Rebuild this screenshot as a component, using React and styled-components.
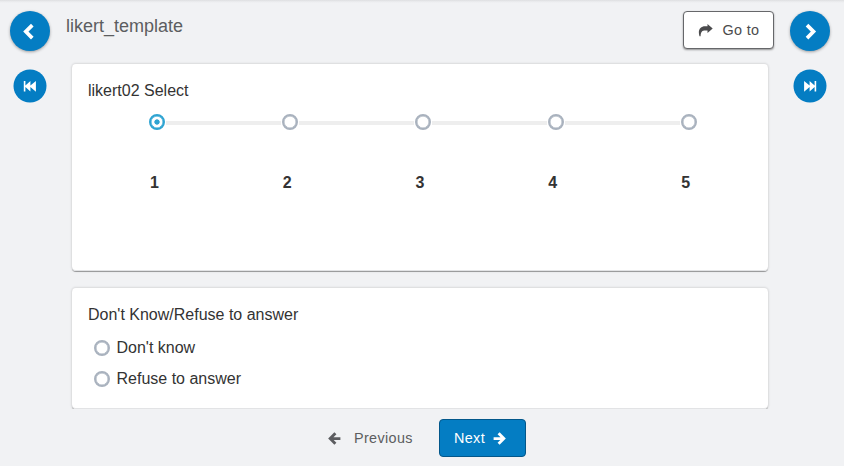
import React, { useState } from "react";
import styled, { createGlobalStyle } from "styled-components";

const GlobalStyle = createGlobalStyle`
  * { box-sizing: border-box; }
  body {
    margin: 0;
    background: #f1f2f4;
    color: #333;
    font: 16px/20px "Liberation Sans", Arial, sans-serif;
  }
  button { font-family: inherit; margin: 0; padding: 0; cursor: pointer; }
`;

const Page = styled.div`
  display: grid;
  grid-template-columns: 66px 708px 1fr;
  height: 466px;
  overflow: hidden;
  background: linear-gradient(#dcdddf, #e7e8ea 1px, #f1f2f4 3px);
`;

const SideNav = styled.nav`
  display: flex;
  flex-direction: column;
  align-items: center;
  width: 40px;
  gap: 19px;
  padding-top: 11px;
  margin-left: ${(p) => (p.$end ? "16px" : "10px")};
`;

const RoundButton = styled.button`
  display: flex;
  align-items: center;
  justify-content: center;
  flex: none;
  width: ${(p) => (p.$small ? 32 : 40)}px;
  height: ${(p) => (p.$small ? 32 : 40)}px;
  border: 0;
  border-radius: 50%;
  background: #047dc3;
  color: #fff;
  box-shadow: ${(p) => (p.$small ? "0 0 0 0.5px #047dc3" : "0 1px 3px rgba(0, 0, 0, 0.35)")};
`;

const Center = styled.div`
  display: grid;
  grid-template-rows: 56px 353px 57px;
`;

const Header = styled.header`
  display: flex;
  justify-content: space-between;
  align-items: flex-start;
  padding-top: 11px;
`;

const Title = styled.h1`
  margin: 4px 0 0;
  font-size: 18px;
  line-height: 22px;
  font-weight: 400;
  color: #5c5d60;
`;

const GoToButton = styled.button`
  display: flex;
  align-items: center;
  width: 91px;
  height: 38px;
  padding-left: 14px;
  gap: 9.5px;
  border: 1px solid #66676a;
  border-radius: 4px;
  background: #fff;
  color: #4b4b4d;
  font-size: 14.4px;
  letter-spacing: 0.35px;
  box-shadow: 0 1px 2px rgba(0, 0, 0, 0.4);
`;

const Forms = styled.main`
  display: flex;
  flex-direction: column;
  gap: 17px;
  padding: 8px 6px 0;
  overflow: hidden;
`;

const Card = styled.section`
  flex: none;
  height: ${(p) => p.$height}px;
  padding: 17px 16px 16px;
  border-radius: 4px;
  background: #fff;
  box-shadow: inset 0 -1px 0 #e2e3e5, 0 0 2px 1px rgba(0, 0, 0, 0.1),
    0 1px 0 rgba(0, 0, 0, 0.3);
`;

const Question = styled.h2`
  margin: 0;
  font-size: 16px;
  line-height: 20px;
  font-weight: 400;
`;

const Scale = styled.div`
  display: grid;
  grid-template-columns: repeat(5, 1fr);
  margin-top: 13px;
`;

const Step = styled.label`
  display: flex;
  flex-direction: column;
  align-items: center;
  gap: 43px;
  font-weight: 700;
`;

const StepTrack = styled.span`
  display: flex;
  align-items: center;
  align-self: stretch;
  height: 16px;
  gap: 1px;
`;

const Segment = styled.span`
  height: 4px;
  margin-top: 2px;
  background: ${(p) => (p.$hidden ? "transparent" : "#eee")};
  flex: ${(p) => (p.$before ? "0 0 60.4px" : "1 1 0")};
`;

const Radio = styled.input`
  appearance: none;
  flex: none;
  width: 16px;
  height: 16px;
  margin: 0;
  border: 2px solid #a9b2be;
  box-shadow: inset 0 0 0 0.5px #a9b2be;
  border-radius: 50%;
  background: #fff;
  cursor: pointer;
  &:checked {
    border-color: #2fa4d2;
    box-shadow: inset 0 0 0 0.5px #2fa4d2;
    background: radial-gradient(circle, #2fa4d2 2.3px, #fff 3px);
  }
`;

const Choices = styled.div`
  display: flex;
  flex-direction: column;
  gap: 11px;
  padding: 13px 0 0 5.5px;
`;

const Choice = styled.label`
  display: flex;
  align-items: center;
  gap: 7px;
  line-height: 20px;
`;

const Footer = styled.footer`
  display: flex;
  align-items: flex-start;
  justify-content: space-between;
  padding: 10px 248px 0 262px;
`;

const FooterButton = styled.button`
  display: flex;
  align-items: center;
  height: 38px;
  border: 0;
  background: none;
  color: #5c5d60;
  font-size: 14.4px;
  letter-spacing: 0.35px;
  gap: 13px;
`;

const NextButton = styled(FooterButton)`
  width: 87px;
  padding-left: 14px;
  gap: 8px;
  border: 1px solid #03578a;
  border-radius: 4px;
  background: #047dc3;
  color: #fff;
`;

const Glyph = styled.svg`
  display: block;
  flex: none;
  transform: ${(p) => (p.$flip ? "scaleX(-1)" : "none")};
`;

const Chevron = ({ flip }) => (
  <Glyph $flip={flip} width="16" height="18" viewBox="0 0 16 18" fill="none" stroke="currentColor" strokeWidth="3.7">
    <path d={flip ? "M11 3.1 4.5 9.6 11 16.1" : "M10.3 3.1 3.8 9.6 10.3 16.1"} />
  </Glyph>
);

const Skip = ({ flip }) => (
  <Glyph $flip={flip} width="14" height="12" viewBox="0 0 14 12" fill="currentColor">
    <path d="M.8 1h1.6v4.6L7.4 1v4.4L12.9.9v10.8L7.4 7.1v4.5L2.4 7v4.5H.8z" />
  </Glyph>
);

const Arrow = ({ flip }) => (
  <Glyph $flip={flip} width="13" height="13" viewBox="0 0 13 13" fill="none" stroke="currentColor" strokeWidth="2.9">
    <path d="M7.4 1.3 2.2 6.6l5.2 5.2M2.6 6.6h9.8" />
  </Glyph>
);

const ShareArrow = () => (
  <Glyph width="15" height="13" viewBox="0 0 15 13" fill="currentColor">
    <path d="M9.5 0 14.7 4.4 9.5 8.9V6.6H7.2C4.2 6.6 2.7 7.8 2.6 12.3H1.5C-.4 6.2 2 2.2 7.2 2.2h2.3z" />
  </Glyph>
);

const steps = ["1", "2", "3", "4", "5"];
const refusals = ["Don't know", "Refuse to answer"];

export default function App() {
  const [value, setValue] = useState("1");
  const [refusal, setRefusal] = useState("");

  return (
    <>
      <GlobalStyle />
      <Page>
        <SideNav>
          <RoundButton aria-label="Previous form"><Chevron /></RoundButton>
          <RoundButton $small aria-label="First form"><Skip /></RoundButton>
        </SideNav>
        <Center>
          <Header>
            <Title>likert_template</Title>
            <GoToButton><ShareArrow />Go to</GoToButton>
          </Header>
          <Forms>
            <Card $height={207}>
              <Question>likert02 Select</Question>
              <Scale>
                {steps.map((step, i) => (
                  <Step key={step}>
                    <StepTrack>
                      <Segment $before $hidden={i === 0} />
                      <Radio
                        type="radio"
                        name="likert"
                        checked={value === step}
                        onChange={() => setValue(step)}
                      />
                      <Segment $hidden={i === steps.length - 1} />
                    </StepTrack>
                    {step}
                  </Step>
                ))}
              </Scale>
            </Card>
            <Card $height={121}>
              <Question>Don't Know/Refuse to answer</Question>
              <Choices>
                {refusals.map((item) => (
                  <Choice key={item}>
                    <Radio
                      type="radio"
                      name="refusal"
                      checked={refusal === item}
                      onChange={() => setRefusal(item)}
                    />
                    {item}
                  </Choice>
                ))}
              </Choices>
            </Card>
          </Forms>
          <Footer>
            <FooterButton><Arrow />Previous</FooterButton>
            <NextButton>Next<Arrow flip /></NextButton>
          </Footer>
        </Center>
        <SideNav $end>
          <RoundButton aria-label="Next form"><Chevron flip /></RoundButton>
          <RoundButton $small aria-label="Last form"><Skip flip /></RoundButton>
        </SideNav>
      </Page>
    </>
  );
}
